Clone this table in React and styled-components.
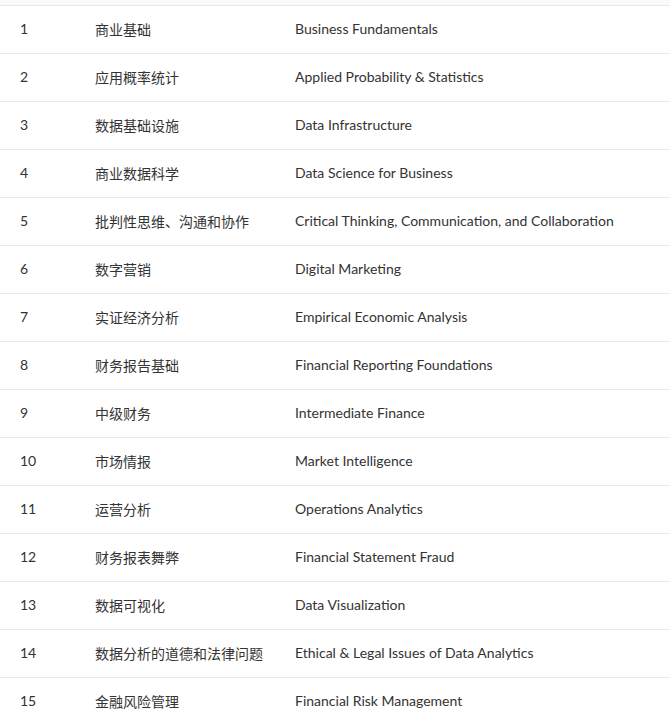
import React from "react";
import styled, { createGlobalStyle } from "styled-components";

const courses = [
  ["商业基础", "Business Fundamentals"],
  ["应用概率统计", "Applied Probability & Statistics"],
  ["数据基础设施", "Data Infrastructure"],
  ["商业数据科学", "Data Science for Business"],
  ["批判性思维、沟通和协作", "Critical Thinking, Communication, and Collaboration"],
  ["数字营销", "Digital Marketing"],
  ["实证经济分析", "Empirical Economic Analysis"],
  ["财务报告基础", "Financial Reporting Foundations"],
  ["中级财务", "Intermediate Finance"],
  ["市场情报", "Market Intelligence"],
  ["运营分析", "Operations Analytics"],
  ["财务报表舞弊", "Financial Statement Fraud"],
  ["数据可视化", "Data Visualization"],
  ["数据分析的道德和法律问题", "Ethical & Legal Issues of Data Analytics"],
  ["金融风险管理", "Financial Risk Management"],
];

const GlobalStyle = createGlobalStyle`
  body {
    margin: 0;
    background: #fff;
    font-family: Lato, "Noto Sans CJK SC", sans-serif;
    color: #333;
  }
`;

const Table = () => {
  return (
    <Wrapper>
      <HeadTail />
      {courses.map(([zh, en], i) => (
        <Row key={i}>
          <Cell width="95px" pad="20px">{i + 1}</Cell>
          <Cell width="200px">{zh}</Cell>
          <Cell>{en}</Cell>
        </Row>
      ))}
    </Wrapper>
  );
};

const Wrapper = styled.div`
  width: 670px;
  font-size: 14px;
`;

const HeadTail = styled.div`
  height: 5px;
  background: #fafafa;
  border-bottom: 1px solid #e8e8e8;
`;

const Row = styled.div`
  display: flex;
  align-items: center;
  height: 47px;
  padding-bottom: 2px;
  box-sizing: border-box;
  border-bottom: 1px solid #e8e8e8;
  height: 48px;
`;

const Cell = styled.div`
  flex: ${(p) => (p.width ? `0 0 ${p.width}` : "1")};
  padding-left: ${(p) => p.pad || "0"};
  box-sizing: border-box;
  white-space: nowrap;
`;

export default function App() {
  return (
    <>
      <GlobalStyle />
      <Table />
    </>
  );
}
